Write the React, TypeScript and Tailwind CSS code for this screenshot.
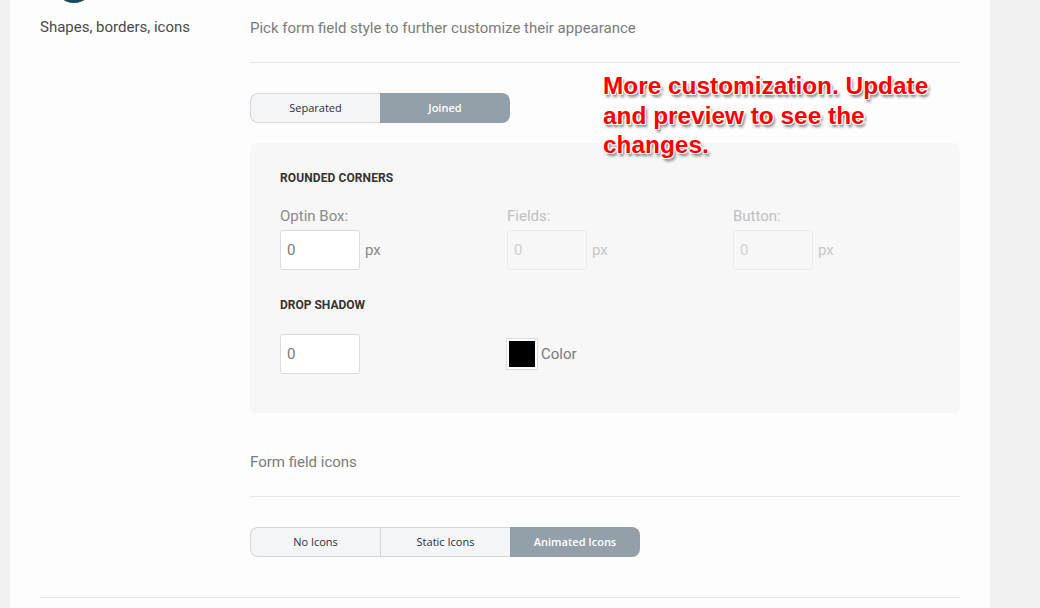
import React from "react";

const Segmented = ({ items, active, width }: { items: string[]; active: number; width: number }) => {
  return (
    <div className="flex h-[30px] font-['Open_Sans',sans-serif] text-[11px]">
      {items.map((label, i) => {
        const isActive = i === active;
        const first = i === 0;
        const last = i === items.length - 1;
        return (
          <div
            key={label}
            style={{ width }}
            className={`flex items-center justify-center ${first ? "rounded-l-lg" : ""} ${last ? "rounded-r-lg" : ""} ${
              isActive
                ? "bg-[#939fa9] text-white font-semibold"
                : "bg-[#f4f5f7] text-[#2d2d3a] border-y border-l border-[#d3d6db]"
            }`}
          >
            {label}
          </div>
        );
      })}
    </div>
  );
};

const NumberField = ({ label, disabled, unit = true }: { label?: string; disabled?: boolean; unit?: boolean }) => (
  <div className="flex flex-col">
    {label && (
      <span className={`text-[15px] leading-[18px] mb-[5px] ${disabled ? "text-[#c0c0c0]" : "text-[#8a8a8a]"}`}>{label}</span>
    )}
    <div className="flex items-center">
      <div
        className={`w-[80px] h-[40px] rounded-[3px] border flex items-center pl-[6px] text-[15px] ${
          disabled ? "bg-[#f7f7f7] border-[#ebebeb] text-[#d0d0d0]" : "bg-white border-[#dcdcdc] text-[#7a7a7a]"
        }`}
      >
        0
      </div>
      {unit && <span className={`ml-[5px] text-[15px] ${disabled ? "text-[#c8c8c8]" : "text-[#8a8a8a]"}`}>px</span>}
    </div>
  </div>
);

export default function App() {
  return (
    <div className="w-[1040px] h-[608px] bg-[#f1f1f1] flex overflow-hidden font-['Roboto',sans-serif]">
      <div className="relative ml-[10px] w-[980px] h-full bg-[#fdfdfd]">
        {/* avatar cut off at top */}
        <div className="absolute left-[44px] top-[-37px] w-[40px] h-[40px] rounded-full bg-[#1d4a5e]" />

        <div className="flex pl-[30px] pr-[30px]">
          <div className="w-[210px] pt-[17px] text-[15px] leading-[20px] text-[#4a4a4a]">Shapes, borders, icons</div>

          <div className="flex-1">
            <div className="pt-[18px] text-[15px] leading-[20px] text-[#7b7b7b]">
              Pick form field style to further customize their appearance
            </div>
            <div className="mt-[24px] border-t border-[#e6e6e6]" />

            <div className="mt-[30px]">
              <Segmented items={["Separated", "Joined"]} active={1} width={130} />
            </div>

            <div className="mt-[20px] h-[270px] bg-[#f7f7f7] rounded-md px-[30px] pt-[28px]">
              <div className="text-[12px] leading-[14px] font-bold text-[#333] tracking-[0.1px]">ROUNDED CORNERS</div>
              <div className="mt-[22px] flex">
                <div className="w-[227px]">
                  <NumberField label="Optin Box:" />
                </div>
                <div className="w-[226px]">
                  <NumberField label="Fields:" disabled />
                </div>
                <div>
                  <NumberField label="Button:" disabled />
                </div>
              </div>

              <div className="mt-[28px] text-[12px] leading-[14px] font-bold text-[#333]">DROP SHADOW</div>
              <div className="mt-[22px] flex items-center">
                <div className="w-[227px]">
                  <NumberField unit={false} />
                </div>
                <div className="flex items-center">
                  <div className="w-[30px] h-[30px] bg-black border-2 border-white outline outline-1 outline-[#dcdcdc]" />
                  <span className="ml-[4px] text-[15px] text-[#7a7a7a]">Color</span>
                </div>
              </div>
            </div>

            <div className="mt-[39px] text-[15px] leading-[20px] text-[#7b7b7b]">Form field icons</div>
            <div className="mt-[24px] border-t border-[#e6e6e6]" />

            <div className="mt-[30px]">
              <Segmented items={["No Icons", "Static Icons", "Animated Icons"]} active={2} width={130} />
            </div>
          </div>
        </div>

        <div className="mx-[30px] mt-[40px] border-t border-[#e6e6e6]" />

        {/* annotation */}
        <div className="absolute left-[593px] top-[71px] w-[345px] font-['Liberation_Sans',Arial,sans-serif] font-bold text-[24.4px] leading-[29.5px] text-[#ff0000] [text-shadow:-1px_-1px_0_#fff,1px_-1px_0_#fff,-1px_1px_0_#fff,1px_1px_0_#fff,0_-1px_0_#fff,0_1px_0_#fff,-1px_0_0_#fff,1px_0_0_#fff,2px_3px_3px_rgba(0,0,0,0.55)]">
          More customization. Update and preview to see the changes.
        </div>
      </div>
    </div>
  );
}
